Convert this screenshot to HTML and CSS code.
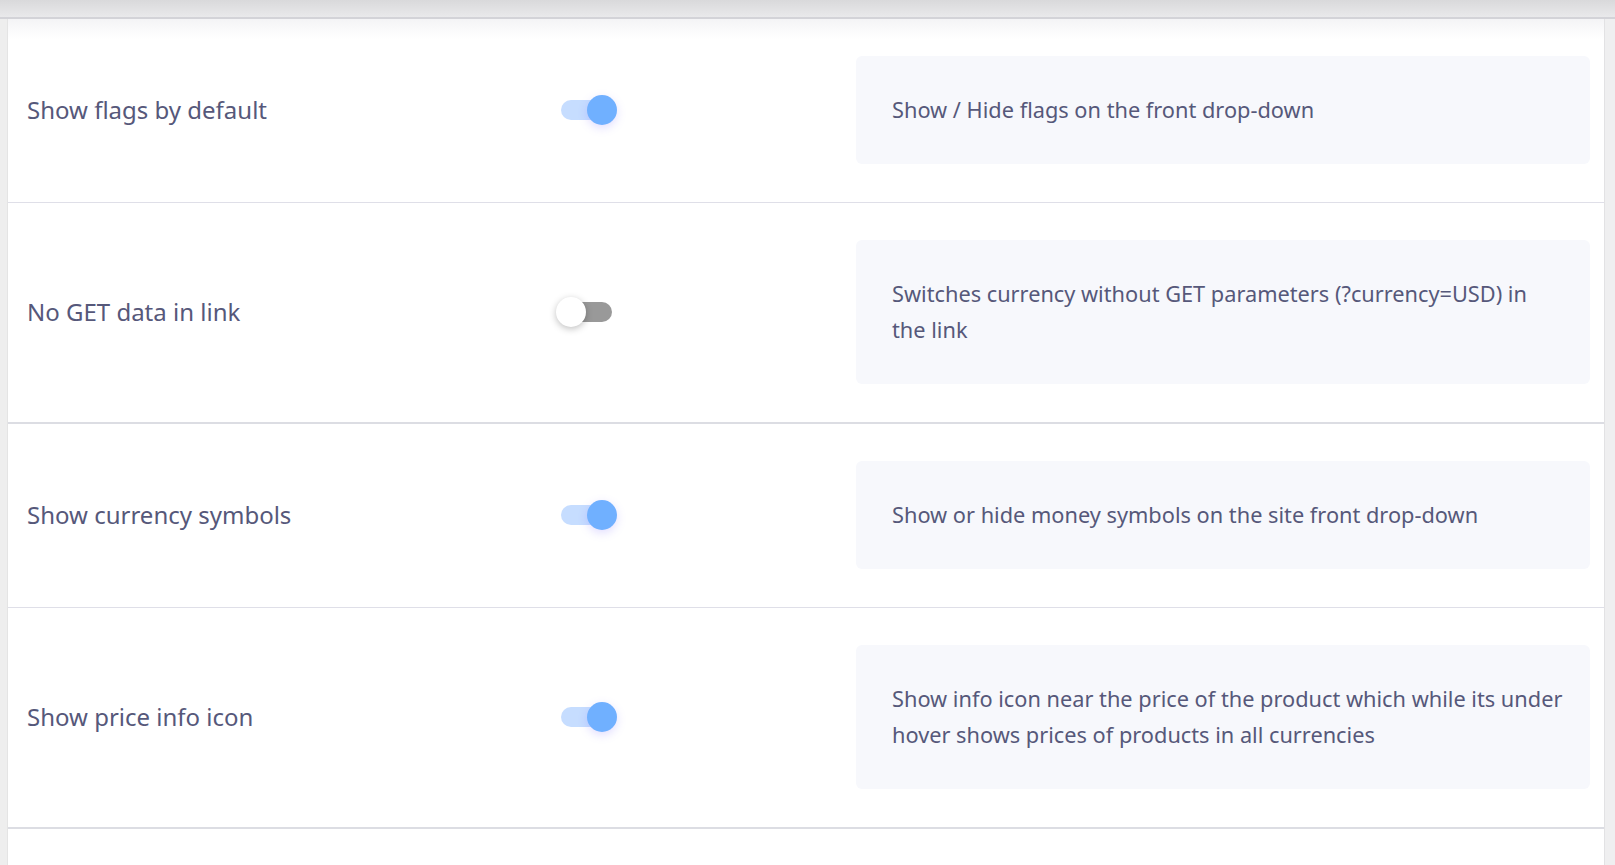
FILE: index.html
```html
<!DOCTYPE html>
<html lang="en">
<head>
<meta charset="utf-8">
<title>Currency options</title>
<link rel="stylesheet" href="styles.css">
</head>
<body>
<div class="topbar"></div>
<div class="frame">
  <div class="gutter-left"></div>
  <main class="options">
    <div class="row">
      <div class="label">Show flags by default</div>
      <div class="control"><span class="toggle on"><span class="knob"></span></span></div>
      <div class="desc">Show / Hide flags on the front drop-down</div>
    </div>
    <div class="row thick">
      <div class="label">No GET data in link</div>
      <div class="control"><span class="toggle off"><span class="knob"></span></span></div>
      <div class="desc">Switches currency without GET parameters (?currency=USD) in the link</div>
    </div>
    <div class="row">
      <div class="label">Show currency symbols</div>
      <div class="control"><span class="toggle on"><span class="knob"></span></span></div>
      <div class="desc">Show or hide money symbols on the site front drop-down</div>
    </div>
    <div class="row thick">
      <div class="label">Show price info icon</div>
      <div class="control"><span class="toggle on"><span class="knob"></span></span></div>
      <div class="desc">Show info icon near the price of the product which while its under hover shows prices of products in all currencies</div>
    </div>
    <div class="row empty"></div>
  </main>
  <div class="gutter-right"></div>
</div>
</body>
</html>
```
FILE: styles.css
```css
* { box-sizing: border-box; }
html, body { margin: 0; padding: 0; }
body {
  background: #ffffff;
  font-family: "Noto Sans", "Lato", sans-serif;
  color: #56587a;
  height: 865px;
  overflow: hidden;
}
.topbar {
  height: 19px;
  background: linear-gradient(#d9d9db, #e9e9eb);
  border-bottom: 2px solid #d3d3d8;
}
.frame {
  display: flex;
  min-height: 846px;
}
.gutter-left {
  width: 8px;
  flex: none;
  background: #eeeeee;
  border-right: 1px solid #e4e4e4;
}
.gutter-right {
  width: 11px;
  flex: none;
  background: #efeff0;
  border-left: 1px solid #e2e2e4;
}
.options {
  flex: 1;
  background: linear-gradient(#f4f4f6, #ffffff 20px);
}
.row {
  display: flex;
  align-items: center;
  padding: 37px 14px 38px 19px;
  border-bottom: 1px solid #dfdfe8;
}
.row.thick { border-bottom: 2px solid #dcdde3; }
.row.empty { border: none; padding: 0; height: 40px; }
.label {
  width: 534px;
  flex: none;
  font-size: 24px;
  line-height: 30px;
}
.control {
  flex: 1;
  display: flex;
  align-items: center;
}
.toggle {
  position: relative;
  display: block;
  width: 51px;
  height: 20px;
  border-radius: 10px;
}
.toggle.on { background: #c6ddff; }
.toggle.off { background: #999999; }
.knob {
  position: absolute;
  top: -5px;
  width: 30px;
  height: 30px;
  border-radius: 50%;
}
.toggle.on .knob {
  right: -5px;
  background: #70b0ff;
  box-shadow: 0 3px 10px rgba(120, 100, 255, 0.22);
}
.toggle.off .knob {
  left: -5px;
  background: #ffffff;
  box-shadow: 0 2px 7px rgba(0, 0, 0, 0.25);
}
.desc {
  width: 734px;
  flex: none;
  background: #f7f8fc;
  border-radius: 6px;
  padding: 36px 26px 36px 36px;
  font-size: 21.75px;
  line-height: 36px;
}
```
